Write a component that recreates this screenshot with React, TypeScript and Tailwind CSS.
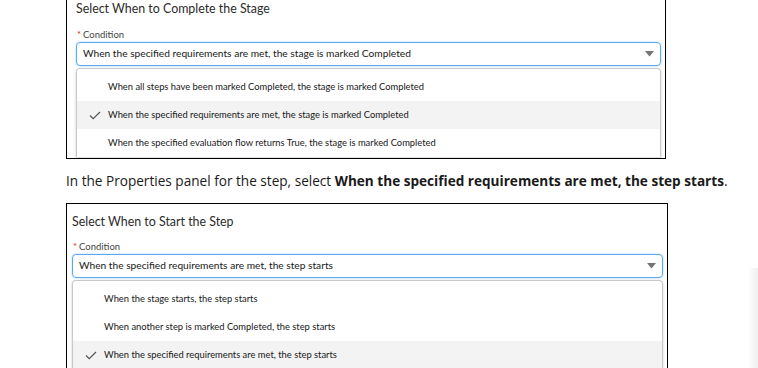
const font = { fontFamily: '"Open Sans", "Noto Sans", Arial, sans-serif' }
const boxFont = { fontFamily: 'Lato, "Open Sans", Arial, sans-serif' }

const Check = () => (
  <svg width="12" height="9" viewBox="0 0 12 9" className="shrink-0">
    <polyline points="1,4.5 4.2,7.6 11,1" fill="none" stroke="#555" strokeWidth="1.2" />
  </svg>
)

const Arrow = () => (
  <svg width="9" height="6" viewBox="0 0 9 6">
    <polygon points="0,0 9,0 4.5,5.5" fill="#747474" />
  </svg>
)

type PanelProps = {
  title: string
  value: string
  options: string[]
  selected: number
  labelGap: string
  inputGap: string
  listPad: string
}

const Panel = ({ title, value, options, selected, labelGap, inputGap, listPad }: PanelProps) => (
  <div style={boxFont}>
    <div className="text-[12.4px] leading-[18px] text-[#2b2b2b]">{title}</div>
    <div className={`${labelGap} text-[9.5px] leading-[12px] text-[#444] pl-[1px]`}>
      <span className="text-[#c23934] mr-[2px]">*</span>Condition
    </div>
    <div className={`${inputGap} h-[24px] mr-[3px] flex items-center justify-between rounded-[4px] border border-[#5aa9f2] shadow-[0_0_2px_#9ccdf7] pl-[6px] pr-[6px] text-[10.2px] text-[#181818]`}>
      <span>{value}</span>
      <Arrow />
    </div>
    <div className={`mt-[2px] mr-[3px] rounded-t-[4px] border border-b-0 border-[#c9c9c9] shadow-[0_1px_3px_rgba(0,0,0,0.2)] ${listPad}`}>
      {options.map((o, i) => (
        <div
          key={o}
          className={`h-[28px] flex items-center text-[9.35px] text-[#181818] ${i === selected ? 'bg-[#f3f3f3]' : ''}`}
        >
          <div className="w-[31px] flex justify-end pr-[7px]">{i === selected && <Check />}</div>
          <span>{o}</span>
        </div>
      ))}
    </div>
  </div>
)

export default function App() {
  return (
    <div className="relative w-[758px] h-[368px] overflow-hidden bg-white" style={font}>
      <div className="pl-[66px] w-[667px]">
        <div className="h-[159px] w-[600px] border-x border-b border-black overflow-hidden pl-[9px] pr-[1px] pt-0">
          <Panel
            title="Select When to Complete the Stage"
            value="When the specified requirements are met, the stage is marked Completed"
            options={[
              'When all steps have been marked Completed, the stage is marked Completed',
              'When the specified requirements are met, the stage is marked Completed',
              'When the specified evaluation flow returns True, the stage is marked Completed',
            ]}
            selected={1}
            labelGap="mt-[11px]"
            inputGap="mt-[1px]"
            listPad="pt-[4px]"
          />
        </div>
      </div>

      <p className="pl-[66px] mt-[13px] text-[13.6px] leading-[18px] text-[#1a1a1a]">
        In the Properties panel for the step, select{' '}
        <b className="font-bold">When the specified requirements are met, the step starts</b>.
      </p>

      <div className="pl-[66px] mt-[13px]">
        <div className="h-[200px] w-[602px] border border-black overflow-hidden pl-[5px] pr-[1px] pt-[9px]">
          <Panel
            title="Select When to Start the Step"
            value="When the specified requirements are met, the step starts"
            options={[
              'When the stage starts, the step starts',
              'When another step is marked Completed, the step starts',
              'When the specified requirements are met, the step starts',
            ]}
            selected={2}
            labelGap="mt-[10px]"
            inputGap="mt-[1px]"
            listPad="pt-[4px]"
          />
        </div>
      </div>

      <div className="absolute right-0 top-[268px] bottom-0 w-[10px] bg-gradient-to-r from-white to-[#efefef]" />
    </div>
  )
}
